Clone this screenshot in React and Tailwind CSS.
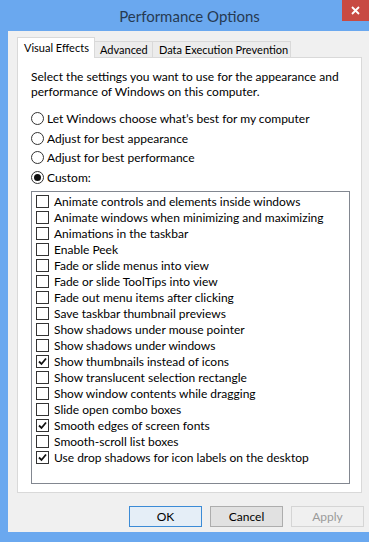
const effects = [
  ['Animate controls and elements inside windows', false],
  ['Animate windows when minimizing and maximizing', false],
  ['Animations in the taskbar', false],
  ['Enable Peek', false],
  ['Fade or slide menus into view', false],
  ['Fade or slide ToolTips into view', false],
  ['Fade out menu items after clicking', false],
  ['Save taskbar thumbnail previews', false],
  ['Show shadows under mouse pointer', false],
  ['Show shadows under windows', false],
  ['Show thumbnails instead of icons', true],
  ['Show translucent selection rectangle', false],
  ['Show window contents while dragging', false],
  ['Slide open combo boxes', false],
  ['Smooth edges of screen fonts', true],
  ['Smooth-scroll list boxes', false],
  ['Use drop shadows for icon labels on the desktop', true],
];

const radios = [
  ['Let Windows choose what\u2019s best for my computer', false],
  ['Adjust for best appearance', false],
  ['Adjust for best performance', false],
  ['Custom:', true],
];

const Radio = ({ label, checked }) => (
  <div className="flex items-center h-[19.5px]">
    <span className="w-[13px] h-[13px] rounded-full border border-[#333] bg-white flex items-center justify-center">
      {checked && <span className="w-[7px] h-[7px] rounded-full bg-[#111]" />}
    </span>
    <span className="ml-[3px]">{label}</span>
  </div>
);

const Check = ({ label, checked }) => (
  <div className="flex items-center h-4">
    <span className="w-[13px] h-[13px] border border-[#333] bg-white flex items-center justify-center">
      {checked && (
        <svg width="9" height="9" viewBox="0 0 9 9">
          <path d="M1 4.5 L3.5 7 L8 1.5" fill="none" stroke="#111" strokeWidth="1.8" />
        </svg>
      )}
    </span>
    <span className="ml-[5px]">{label}</span>
  </div>
);

export default function App() {
  return (
    <div
      className="w-[369px] h-[542px] bg-[#6aa8ef] flex flex-col text-[12px] leading-[15px] text-black overflow-hidden"
      style={{ fontFamily: 'Lato, "Liberation Sans", sans-serif' }}
    >
      {/* Title bar */}
      <div className="relative h-[31px] shrink-0 flex items-center justify-center">
        <span className="text-[15px] leading-5 text-[#263a52] ml-[10px]">Performance Options</span>
        <div className="absolute right-0 top-0 w-[27px] h-[21px] bg-[#c84a43] flex items-center justify-center">
          <svg width="9" height="9" viewBox="0 0 9 9">
            <path d="M1 1 L8 8 M8 1 L1 8" stroke="#fff" strokeWidth="1.8" />
          </svg>
        </div>
      </div>

      {/* Client area */}
      <div className="flex-1 ml-[8px] mb-[10px] bg-[#f0f0f0] flex flex-col pl-[9px] pr-[5px] pt-[6px]">
        {/* Tabs */}
        <div className="flex items-end h-[21px] relative z-10 text-[11px]">
          <div className="h-[21px] w-[78px] pl-[6px] bg-white border border-b-0 border-[#d9d9d9] flex items-center pb-[2px]">
            Visual Effects
          </div>
          <div className="h-[17px] w-[58px] pl-[5px] bg-[#ececec] border border-l-0 border-[#d9d9d9] flex items-center">
            Advanced
          </div>
          <div className="h-[17px] w-[138px] pl-[6px] bg-[#ececec] border border-l-0 border-[#d9d9d9] flex items-center">
            Data Execution Prevention
          </div>
        </div>

        {/* Panel */}
        <div className="h-[436px] mr-[2px] -mt-px bg-white border border-[#d9d9d9] pl-[13px] pr-[11px] pt-[11px] flex flex-col">
          <p>
            Select the settings you want to use for the appearance and
            <br />
            performance of Windows on this computer.
          </p>
          <div className="mt-[10px] flex flex-col">
            {radios.map(([label, checked]) => (
              <Radio key={label} label={label} checked={checked} />
            ))}
          </div>
          <div className="mt-[4px] h-[293px] border border-[#828790] pl-[4px] pt-[1px]">
            {effects.map(([label, checked]) => (
              <Check key={label} label={label} checked={checked} />
            ))}
          </div>
        </div>

        {/* Buttons */}
        <div className="flex justify-end gap-[8px] mt-[13px]">
          <button className="w-[73px] h-[21px] border border-[#3c8bd6] bg-[#e5eef7] text-black">OK</button>
          <button className="w-[73px] h-[21px] border border-[#adadad] bg-[#e1e1e1] text-black">Cancel</button>
          <button className="w-[73px] h-[21px] border border-[#d5d5d5] bg-[#f0f0f0] text-[#9a9a9a]">Apply</button>
        </div>
      </div>
    </div>
  );
}
